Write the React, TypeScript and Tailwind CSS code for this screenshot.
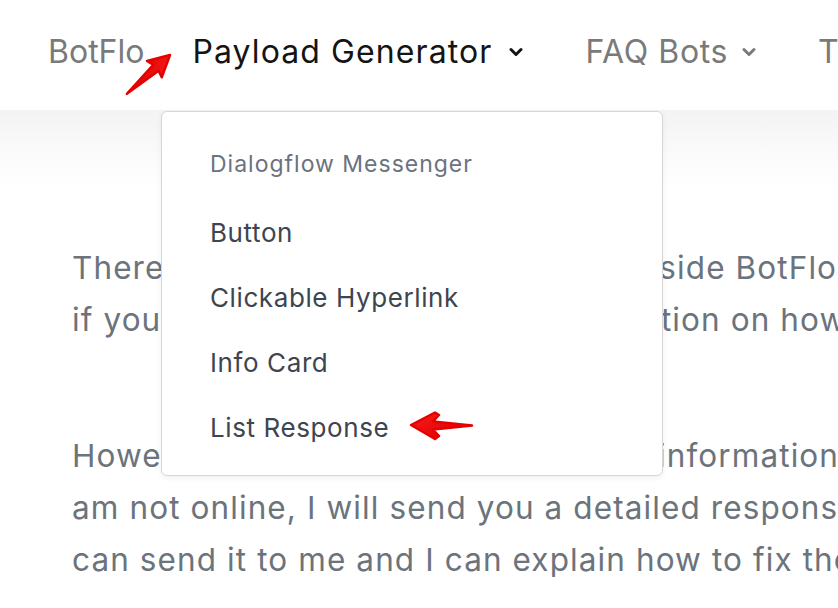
import React from "react";

function Chevron({ color }: { color: string }) {
  return (
    <svg width="14" height="10" viewBox="0 0 14 10" className="block">
      <polyline points="2,2.5 7,7.5 12,2.5" fill="none" stroke={color} strokeWidth="3" strokeLinecap="round" strokeLinejoin="round" />
    </svg>
  );
}

export default function App() {
  return (
    <div className="relative w-[838px] h-[608px] overflow-hidden bg-white" style={{ fontFamily: "Inter, 'Open Sans', sans-serif" }}>
      {/* Header */}
      <header className="h-[110px] bg-white flex items-center pl-[48px] pb-[6px] whitespace-nowrap">
        <span className="text-[32px] leading-none text-[#7a7a7a] tracking-[0px]">BotFlo</span>
        <span className="ml-[48px] text-[32px] leading-none text-[#141414] tracking-[1.1px]">Payload Generator</span>
        <span className="ml-[16px]"><Chevron color="#141414" /></span>
        <span className="ml-[63px] text-[32px] leading-none text-[#7a7a7a] tracking-[0.6px]">FAQ Bots</span>
        <span className="ml-[14px]"><Chevron color="#7a7a7a" /></span>
        <span className="ml-[62px] text-[32px] leading-none text-[#7a7a7a] tracking-[0.6px]">Templates</span>
      </header>

      {/* Body */}
      <main className="bg-[linear-gradient(to_bottom,#f3f3f3_0px,#fafafa_40px,#ffffff_80px)] pl-[72px] pt-[132px] h-[498px] text-[31.5px] leading-[52px] tracking-[1.1px] text-[#6b737c] whitespace-nowrap">
        <div>There are few known bugs in tools inside BotFlo. Please let me know</div>
        <div>if you find one, share further information on how to reproduce it.</div>
        <div className="mt-[84px]">However, it is better to send me that information. If I</div>
        <div>am not online, I will send you a detailed response by email so that you</div>
        <div>can send it to me and I can explain how to fix the problem.</div>
      </main>

      {/* Dropdown */}
      <div className="absolute left-[161px] top-[111px] w-[502px] h-[365px] bg-white border border-[#d6d6d6] rounded-[6px] shadow-[0_2px_6px_rgba(0,0,0,0.06)] pl-[48px] pt-[20px] whitespace-nowrap">
        <div className="h-[64px] flex items-center text-[23px] tracking-[1px] text-[#6b7280]">Dialogflow Messenger</div>
        <div className="mt-[4px]">
          {["Button", "Clickable Hyperlink", "Info Card", "List Response"].map((t) => (
            <div key={t} className="h-[65px] flex items-center text-[26px] tracking-[0.6px] text-[#3d4550]">{t}</div>
          ))}
        </div>
      </div>

      {/* Red arrows */}
      <svg className="absolute left-0 top-0 pointer-events-none" width="838" height="608">
        <defs>
          <linearGradient id="rg" x1="0" y1="0" x2="1" y2="1">
            <stop offset="0" stopColor="#ff1a1a" />
            <stop offset="1" stopColor="#d00000" />
          </linearGradient>
        </defs>
        <g transform="translate(170,55) rotate(138)">
          <polygon
            points="0,0 21,-11 19,-4 58,0 19,4 21,11"
            fill="url(#rg)"
            stroke="#e60000"
            strokeWidth="2.5"
            strokeLinejoin="round"
          />
        </g>
        <polygon
          points="411,425 435,412.5 439,415 433,421.5 472,425.5 433,429.5 439,436 435,439"
          fill="url(#rg)"
          stroke="#e60000"
          strokeWidth="2.5"
          strokeLinejoin="round"
        />
      </svg>
    </div>
  );
}
